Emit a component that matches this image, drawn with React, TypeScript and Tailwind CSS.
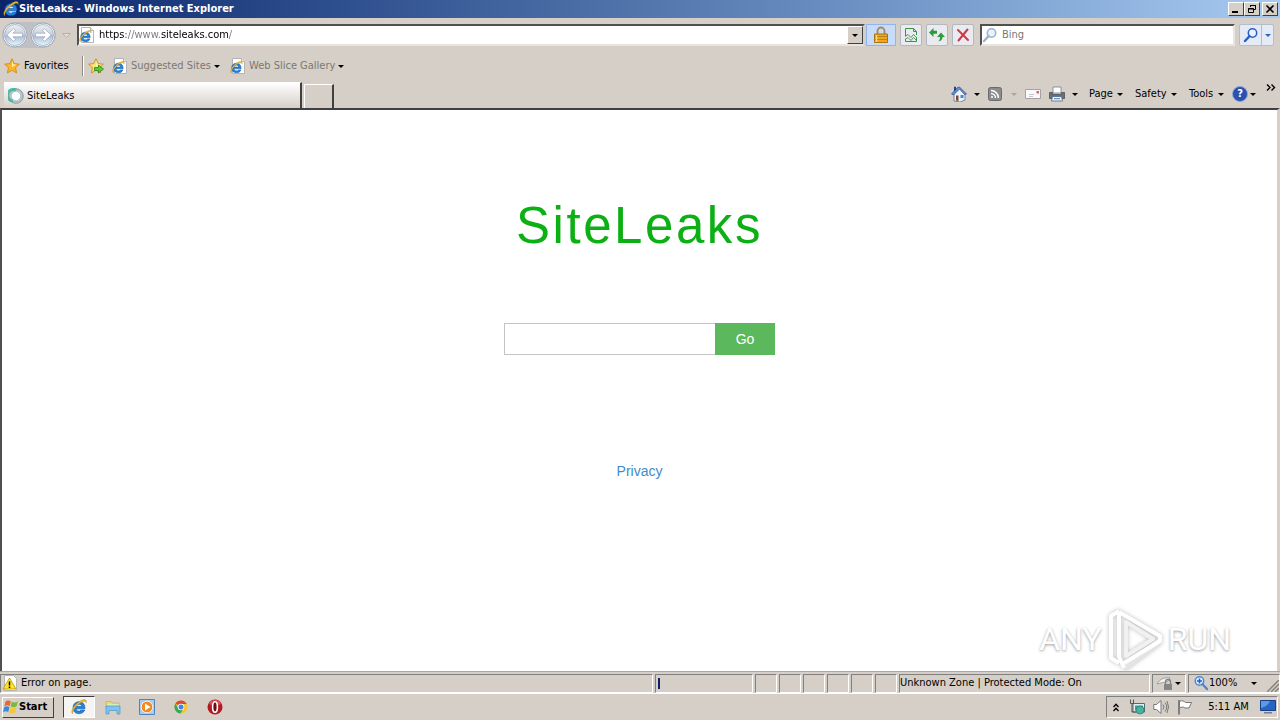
import { type ReactNode } from 'react'

const raised = 'border border-t-white border-l-white border-r-[#404040] border-b-[#404040] bg-[#d5cfc7]'
const sunken = 'border border-t-[#808080] border-l-[#808080] border-r-white border-b-white'

function Caret({ className = 'text-black' }: { className?: string }) {
  return (
    <svg viewBox="0 0 6 3" className={`h-[3px] w-[6px] shrink-0 ${className}`} fill="currentColor" aria-hidden="true">
      <path d="M0 0h6L3 3z" />
    </svg>
  )
}

function IeGlyph() {
  return (
    <>
      <path d="M14 9.800H5.200c.1 1.700 1.200 2.500 2.900 2.500 1.200 0 2-.4 2.500-1.200h3.100c-.8 2.300-2.800 3.600-5.700 3.600-3.700 0-6-2.300-6-5.900 0-3.700 2.400-6.100 6.100-6.100 3.800 0 6 2.600 5.900 7.100zM5.300 7.500h5.400C10.600 6 9.600 5.200 8 5.200S5.500 6 5.300 7.500z" fill="#2384dc" stroke="#0c4796" strokeWidth=".5" />
      <path d="M1.600 14.800C-1 12.400 3 6 8.500 2.400 12.500-.2 16.300-.3 15 3.800c.1-2.200-2.400-1.900-5.700.1C4.800 6.600 1.200 12 1.600 14.800z" fill="#f6bd2c" stroke="#a97c1c" strokeWidth=".4" />
    </>
  )
}

function IeIcon({ className = 'size-4' }: { className?: string }) {
  return (
    <svg viewBox="0 0 16 16" className={`shrink-0 ${className}`} aria-hidden="true">
      <circle cx="8" cy="8.500" r="5.500" fill="#cdeafd" />
      <IeGlyph />
    </svg>
  )
}

function PageIcon() {
  return (
    <svg viewBox="0 0 16 16" className="size-4 shrink-0" aria-hidden="true">
      <path d="M2.500.5h9l3 3v12h-12z" fill="#fff" stroke="#b4b4b4" />
      <path d="M11.500.5v3h3" fill="#eee" stroke="#b4b4b4" />
      <g transform="translate(0 3) scale(.8)">
        <IeGlyph />
      </g>
    </svg>
  )
}

function StarIcon({ add = false }: { add?: boolean }) {
  return (
    <svg viewBox="0 0 16 16" className="size-4 shrink-0" aria-hidden="true">
      <path d="M8 .8l2.200 4.800 5.200.6-3.900 3.500 1.100 5.200L8 12.300l-4.600 2.600 1.100-5.200L.6 6.200l5.200-.6z" fill={add ? '#fbe279' : '#fbb62d'} stroke="#d18a1b" strokeWidth=".9" />
      <path d="M8 3l1.300 3.300 3 .4L8 9z" fill="#fff0a8" />
      {add && <path d="M6.500 9.500h4V7l5 4-5 4v-2.500h-4z" fill="#5cc83e" stroke="#28861b" strokeWidth=".8" />}
    </svg>
  )
}

function NavButton({ label, back = false }: { label: string; back?: boolean }) {
  return (
    <button type="button" aria-label={label} className="size-[26px] shrink-0">
      <svg viewBox="0 0 26 26" className="size-full">
        <defs>
          <linearGradient id={back ? 'orb-back' : 'orb-next'} x1="0" y1="0" x2="0" y2="1">
            <stop offset="0" stopColor="#eceff4" />
            <stop offset=".48" stopColor="#c9d1de" />
            <stop offset=".5" stopColor="#a9b8d0" />
            <stop offset="1" stopColor="#e2f8ff" />
          </linearGradient>
        </defs>
        <circle cx="13" cy="13" r="12" fill="#fff" stroke="#a3a8b2" />
        <circle cx="13" cy="13" r="10.500" fill={back ? 'url(#orb-back)' : 'url(#orb-next)'} stroke="#8fa3bd" strokeWidth=".7" />
        <path
          d="M4.800 13l6.700-6.300 2 2-2.600 2.500h9.600v3.600h-9.600l2.600 2.500-2 2z"
          transform={back ? undefined : 'translate(26 0) scale(-1 1)'}
          fill="#fff"
          stroke="#8e9bb2"
          strokeWidth=".6"
        />
      </svg>
    </button>
  )
}

function Magnifier({ color, flip = false }: { color: string; flip?: boolean }) {
  return (
    <svg viewBox="0 0 16 16" className="size-4 shrink-0" aria-hidden="true">
      <g transform={flip ? 'translate(16 0) scale(-1 1)' : undefined} fill="none" stroke={color}>
        <circle cx="9.500" cy="6" r="4.200" fill="#e8f3fd" strokeWidth="1.500" />
        <path d="M6.400 9.200L2 14" strokeWidth="2.400" strokeLinecap="round" />
        {flip && <path d="M9.500 3.500v5M7 6h5" stroke="#1c5fd0" strokeWidth="1.600" />}
      </g>
    </svg>
  )
}

function ToolButton({ label, children }: { label: string; children: ReactNode }) {
  return (
    <button type="button" aria-label={label} className="flex h-[22px] w-[22px] shrink-0 items-center justify-center rounded-xs border border-[#b2b7c0] bg-[#e9ebf0]">
      {children}
    </button>
  )
}

function TitleBar() {
  return (
    <header className="flex h-[18px] items-center bg-linear-to-r from-[#0a246a] to-[#a6caf0] pr-[2px] pl-[3px] text-white">
      <IeIcon />
      <h1 className="flex-1 font-bold">SiteLeaks - Windows Internet Explorer</h1>
      <button type="button" aria-label="Minimize" className={`flex h-[14px] w-4 items-end p-[2px] ${raised}`}>
        <span className="ml-px h-[2px] w-[6px] bg-black" />
      </button>
      <button type="button" aria-label="Restore" className={`mr-[2px] flex h-[14px] w-4 items-center justify-center ${raised}`}>
        <svg viewBox="0 0 10 10" className="size-[10px]" fill="none" stroke="#000">
          <path d="M3.500 3V1.500h5v4H7M3 1.500h6M1.500 4.500h5v4h-5zM1 5h6" />
        </svg>
      </button>
      <button type="button" aria-label="Close" className={`flex h-[14px] w-4 items-center justify-center ${raised}`}>
        <svg viewBox="0 0 10 10" className="size-[10px]" fill="none" stroke="#000" strokeWidth="1.600">
          <path d="M1.500 1.500l7 7M8.500 1.500l-7 7" />
        </svg>
      </button>
    </header>
  )
}

function AddressRow() {
  return (
    <div className="flex h-[34px] items-center pr-[6px] pl-[2px]">
      <div className="flex gap-[2px] rounded-full bg-[#bfc0c6]">
        <NavButton label="Back" back />
        <NavButton label="Forward" />
      </div>
      <button type="button" aria-label="Recent pages" className="flex w-[21px] justify-center">
        <svg viewBox="0 0 9 5" className="h-[5px] w-[9px]">
          <path d="M.8.5h7.400L4.500 4.400z" fill="#e6e2dc" stroke="#a9a5a0" strokeWidth=".8" />
        </svg>
      </button>
      <div className="flex h-[22px] flex-1 items-center border-2 border-t-[#505050] border-r-[#d5cfc7] border-b-[#e8e4de] border-l-[#505050] bg-white">
        <PageIcon />
        <input
          type="text"
          aria-label="Address"
          defaultValue="https://www.siteleaks.com/"
          className="ml-1 h-4 min-w-0 flex-1 bg-[linear-gradient(to_right,#000_27px,#777_27px,#777_62px,#000_62px,#000_129px,#777_129px)] bg-clip-text text-transparent outline-none"
        />
        <button type="button" aria-label="Show addresses" className={`flex h-[18px] w-4 items-center justify-center ${raised}`}>
          <Caret />
        </button>
      </div>
      <button type="button" aria-label="Security report" className="ml-px flex h-[22px] w-[30px] items-center justify-center border border-[#8fb4f0] bg-[#c8dbfb]">
        <svg viewBox="0 0 16 18" className="h-[18px] w-4">
          <path d="M4.500 8V5a3.500 3.500 0 017 0v3" fill="none" stroke="#a48a55" strokeWidth="1.800" />
          <path d="M1.500 8h13v8.500h-13z" fill="#eda91f" stroke="#a87310" />
          <path d="M2 10.500h12M2 13.500h12" stroke="#c17f0b" />
          <path d="M3.500 9v7" stroke="#ffd978" strokeWidth="1.500" />
        </svg>
      </button>
      <div className="ml-1 flex gap-1">
        <ToolButton label="Compatibility view">
          <svg viewBox="0 0 16 16" className="size-4 shrink-0" fill="none" stroke="#389442">
            <path d="M2.500 9V1.500h8l3 3V8M2.500 12v2.500h11V11M10.500 1.500v3h3" />
            <path d="M2 9.500l3-2 3 3 2.500-3L14 11M2 12.500l3-2 3 3 2.500-3L14 14" strokeWidth=".9" />
          </svg>
        </ToolButton>
        <ToolButton label="Refresh">
          <svg viewBox="0 0 16 16" className="size-4 shrink-0" fill="#2f9a3c">
            <path d="M0 5.500L4.500 1v2.700h3.500v3H4.500V10z" />
            <path d="M12 5.500l4 4.500h-2.400c-.2 2.700-1.700 4.300-4.600 4.500 1.500-1 2-2.400 2-4.500H8z" />
          </svg>
        </ToolButton>
        <ToolButton label="Stop">
          <svg viewBox="0 0 16 16" className="size-4 shrink-0" fill="none" stroke="#cf3a42" strokeWidth="2" strokeLinecap="round">
            <path d="M3 3l10 10M12.500 2.500L3.500 13.500" />
          </svg>
        </ToolButton>
      </div>
      <div className="ml-[6px] flex h-[22px] w-[255px] items-center border-2 border-t-[#505050] border-r-[#e8e4de] border-b-[#e8e4de] border-l-[#505050] bg-white">
        <Magnifier color="#9db1c8" />
        <input type="search" aria-label="Search" placeholder="Bing" className="ml-1 h-4 min-w-0 flex-1 outline-none placeholder:text-[#777]" />
      </div>
      <div className="ml-1 flex h-[22px] rounded-xs border border-[#b2bdd0] bg-[#e4ebf6]">
        <button type="button" aria-label="Go" className="flex w-[21px] items-center justify-center">
          <Magnifier color="#2a5dc4" />
        </button>
        <button type="button" aria-label="Search options" className="flex w-3 items-center justify-center border-l border-[#b2bdd0]">
          <Caret className="text-[#2d66ad]" />
        </button>
      </div>
    </div>
  )
}

function FavoritesRow() {
  return (
    <div className="flex h-7 items-center pl-1 whitespace-nowrap">
      <button type="button" className="flex w-[78px] items-center gap-1">
        <StarIcon />
        Favorites
      </button>
      <span className="h-5 w-[2px] border-r border-l border-r-white border-l-[#8e8a85]" />
      <button type="button" aria-label="Add to Favorites Bar" className="ml-1 flex">
        <StarIcon add />
      </button>
      <button type="button" className="ml-2 flex w-[108px] items-center gap-[3px] text-[#7b7873]">
        <PageIcon />
        <span className="flex-1 text-left">Suggested Sites</span>
        <Caret />
      </button>
      <button type="button" className="ml-[10px] flex w-[113px] items-center gap-[3px] text-[#7b7873]">
        <PageIcon />
        <span className="flex-1 text-left">Web Slice Gallery</span>
        <Caret />
      </button>
    </div>
  )
}

function Menu({ label, width }: { label: string; width: string }) {
  return (
    <button type="button" className={`flex items-center justify-between ${width}`}>
      {label}
      <Caret />
    </button>
  )
}

function TabRow() {
  return (
    <div className="flex h-7 pl-1">
      <nav aria-label="Tabs" className="flex flex-1 items-end gap-[2px]">
        <a href="#page" className="flex h-[26px] w-[298px] items-center gap-[3px] border-t border-r-2 border-t-white border-r-[#404040] bg-linear-to-b from-white to-[#d5cfc7] pl-1">
          <svg viewBox="0 0 16 16" className="size-4 shrink-0" fill="none" strokeWidth="3">
            <circle cx="8" cy="8" r="5.800" fill="#fff" stroke="#b4c6ca" />
            <path d="M8 2.200A5.800 5.800 0 105 13" stroke="#4fc3a7" />
            <circle cx="8" cy="8" r="7.300" stroke="#6d8a90" strokeWidth=".7" />
          </svg>
          SiteLeaks
        </a>
        <button type="button" aria-label="New Tab" className="h-6 w-[30px] border-t border-r-2 border-l border-t-white border-r-[#404040] border-l-white" />
      </nav>
      <div className="flex items-center pr-1">
        <button type="button" aria-label="Home" className="flex w-[29px] items-center justify-between">
          <svg viewBox="0 0 16 16" className="size-4">
            <path d="M3 7v8l6 1 5-2V8L8 2z" fill="#e9f2fd" stroke="#54709e" strokeWidth=".8" />
            <path d="M.5 8L6.500 1.500l2-.5L15.500 8l-2 .5-5-5.500-6 6z" fill="#6a8fd0" stroke="#284a8c" strokeWidth=".7" />
            <path d="M3 .8h2v3l-2 2z" fill="#24408a" />
            <path d="M5 9.500h2.500V15L5 14.500z" fill="#7a4a2a" />
            <path d="M9.500 9h3v3h-3z" fill="#3f8bd0" />
          </svg>
          <Caret />
        </button>
        <button type="button" aria-label="Feeds" className="ml-2 flex w-[29px] items-center justify-between">
          <svg viewBox="0 0 14 14" className="size-[14px]" fill="none" stroke="#fff" strokeWidth="1.500">
            <rect x=".5" y=".5" width="13" height="13" rx="2" fill="#8c8c8c" stroke="#6b6b6b" strokeWidth="1" />
            <path d="M3 6.500a4.500 4.500 0 014.500 4.500M3 3.500A7.500 7.500 0 0110.500 11" />
            <circle cx="4" cy="10" r="1" fill="#fff" stroke="none" />
          </svg>
          <Caret className="text-[#a9a5a0]" />
        </button>
        <button type="button" aria-label="Read mail" className="ml-2">
          <svg viewBox="0 0 16 10" className="h-[10px] w-4">
            <path d="M.5.5h15v9H.500z" fill="#fbfafa" stroke="#a7a2a0" />
            <path d="M11.500 2h2.500v2.500h-2.500z" fill="#d9626e" />
            <path d="M4 5.500h5M4 7.500h4" stroke="#c8c4c8" />
          </svg>
        </button>
        <button type="button" aria-label="Print" className="ml-2 flex w-[29px] items-center justify-between">
          <svg viewBox="0 0 16 16" className="size-4">
            <path d="M4 1h8v6H4z" fill="#fff" stroke="#747c88" strokeWidth=".8" />
            <path d="M.5 6.500h3v2h9v-2h3v6H.500z" fill="#686f79" stroke="#4b525b" strokeWidth=".8" />
            <path d="M3.500 10.500h9l1 4.500H2.500z" fill="#eaf1fa" stroke="#5c6a80" strokeWidth=".8" />
            <path d="M5 12.700h6" stroke="#3f8ad8" />
          </svg>
          <Caret />
        </button>
        <div className="ml-[11px] flex gap-3">
          <Menu label="Page" width="w-[34px]" />
          <Menu label="Safety" width="w-[42px]" />
          <Menu label="Tools" width="w-[35px]" />
        </div>
        <button type="button" aria-label="Help" className="ml-2 flex w-6 items-center justify-between">
          <span className="flex size-4 items-center justify-center rounded-full border border-[#8ba4d8] bg-[#2b51b0] font-bold text-white">?</span>
          <Caret />
        </button>
        <button type="button" aria-label="More commands" className="ml-[10px] self-start pt-1">
          <svg viewBox="0 0 10 7" className="block h-[7px] w-[10px]" fill="none" stroke="#000" strokeWidth="1.400">
            <path d="M1 .5l3 3-3 3M5.500.5l3 3-3 3" />
          </svg>
        </button>
      </div>
    </div>
  )
}

function Watermark() {
  return (
    <div className="absolute right-[46px] bottom-0 flex items-center gap-1 font-[Roboto,sans-serif] text-[32px] leading-10 text-white [text-shadow:0_1px_3px_#999]">
      <span>ANY</span>
      <svg viewBox="0 0 58 64" className="h-16 w-[58px] drop-shadow-[0_0_2px_#bbb]" fill="none" strokeWidth="4" strokeLinejoin="round" aria-hidden="true">
        <path d="M13 4L5 9v42l8 5" stroke="#fff" />
        <path d="M18 61l36-27" stroke="#e4e4e4" strokeWidth="6" />
        <path d="M13 5v45l5 11M13 5l41 24v5L18 56" stroke="#fff" />
        <path d="M20 15l27 17-27 17z" stroke="#f1f1f1" />
      </svg>
      <span>RUN</span>
    </div>
  )
}

function Page() {
  return (
    <main id="page" className="relative flex flex-1 flex-col items-center border-t-2 border-r-3 border-l-2 border-t-[#404040] border-r-[#d5cfc7] border-l-[#505050] bg-white pt-[84px] font-['Liberation_Sans',Arial,sans-serif] text-sm">
      <h2 className="text-[51px] leading-16 tracking-wider text-[#0cb014]">SiteLeaks</h2>
      <form className="mt-[65px] flex h-8">
        <input type="text" aria-label="Search SiteLeaks" className="w-[211px] border border-r-0 border-[#c4c4c4] px-2 outline-none" />
        <button type="button" className="w-[60px] bg-[#5cb85c] text-white">
          Go
        </button>
      </form>
      <a href="#privacy" className="mt-[106px] text-[#428bca]">
        Privacy
      </a>
      <Watermark />
    </main>
  )
}

function StatusBar() {
  return (
    <footer className="flex h-[23px] items-center gap-[2px] border-t border-b border-t-[#aaa6a0] border-b-white pt-px">
      <div className={`flex h-[19px] flex-1 items-center gap-[3px] pl-px ${sunken}`}>
        <svg viewBox="0 0 16 16" className="size-4 shrink-0" aria-hidden="true">
          <path d="M2.500.5h9l3 3v12h-12z" fill="#fff" stroke="#b5b5b5" />
          <path d="M7.500 3L14 14H1z" fill="#ffe327" stroke="#b39400" strokeWidth=".8" />
          <path d="M7.500 6.500v4M7.500 11.500V13" stroke="#000" strokeWidth="1.500" />
        </svg>
        Error on page.
      </div>
      <div className={`h-[19px] w-[98px] py-[3px] pl-[2px] ${sunken}`}>
        <div className="h-full w-[2px] bg-[#0a246a]" />
      </div>
      {[0, 1, 2, 3, 4, 5].map((i) => (
        <div key={i} className={`h-[19px] w-[22px] ${sunken}`} />
      ))}
      <div className={`flex h-[19px] w-[251px] items-center ${sunken}`}>Unknown Zone | Protected Mode: On</div>
      <button type="button" aria-label="InPrivate settings" className={`flex h-[19px] w-[34px] items-center justify-between px-1 ${sunken}`}>
        <svg viewBox="0 0 16 16" className="size-4" fill="none">
          <path d="M0 9c3-5 7-7 13-6-1 2-2 3-3 4-3 0-6 1-10 2z" fill="#f1f1f1" stroke="#8c8c8c" strokeWidth=".8" />
          <path d="M8.500 9V7a2.500 2.500 0 015 0v2" stroke="#808080" strokeWidth="1.300" />
          <path d="M7 9h8v6H7z" fill="#858585" />
        </svg>
        <Caret />
      </button>
      <div className={`flex h-[19px] w-[92px] items-center pl-1 ${sunken}`}>
        <button type="button" className="flex w-[64px] items-center">
          <Magnifier color="#4b87d6" flip />
          <span className="flex-1 text-left">100%</span>
          <Caret />
        </button>
        <svg viewBox="0 0 12 12" className="ml-auto size-3 self-end" stroke="#85817b" strokeWidth="1.500" aria-hidden="true">
          <path d="M0 12L12 0M4 12l8-8M8 12l4-4" />
        </svg>
      </div>
    </footer>
  )
}

function TaskBar() {
  return (
    <div className="flex h-[26px] items-center px-[2px]">
      <button type="button" className={`flex h-[21px] w-[52px] items-center font-bold ${raised}`}>
        <svg viewBox="0 0 16 16" className="size-4 shrink-0" aria-hidden="true">
          <path d="M2.500 2.500C4.500 1 6 1.300 7.800 2.300L6.700 7.200C5 6.200 3.500 6 1.500 7.200z" fill="#ec6531" />
          <path d="M8.700 2.800c2 1 3.700 1 6.100-.5L13.600 7.200c-2 1.200-3.800 1.300-5.900.4z" fill="#79b93e" />
          <path d="M1.200 8.200C3 7 4.800 7.200 6.400 8.200L5.200 13C3.500 12 2 12 0 13.200z" fill="#3989d6" />
          <path d="M7.400 8.700c2 1 3.800.9 6-.4L12.200 13c-2.200 1.400-4 1.500-6 .5z" fill="#f8c72c" />
        </svg>
        Start
      </button>
      <nav aria-label="Taskbar" className="ml-[9px] flex flex-1 items-center">
        <button type="button" aria-label="Internet Explorer" className="mr-[10px] flex h-[22px] w-8 items-center justify-center border border-t-[#404040] border-r-white border-b-white border-l-[#404040] bg-[#f6f4f1]">
          <IeIcon />
        </button>
        <div className="flex gap-[18px]">
          <button type="button" aria-label="Windows Explorer">
            <svg viewBox="0 0 16 16" className="block size-4">
              <path d="M1 2.500h5l1 1.500h7v5H1z" fill="#f1d777" stroke="#cba94a" strokeWidth=".7" />
              <path d="M2.500 5h11v3h-11z" fill="#d6efb5" />
              <path d="M1 7h14v8h-3v-3.500H4V15H1z" fill="#7fc4ec" stroke="#4e96c6" strokeWidth=".7" />
            </svg>
          </button>
          <button type="button" aria-label="Media Player">
            <svg viewBox="0 0 16 16" className="block size-4">
              <path d="M.5.5h15v15H.500z" fill="#a9cdee" stroke="#4f83bd" />
              <circle cx="8" cy="8" r="5.800" fill="#f38a1d" stroke="#fff" strokeWidth=".8" />
              <path d="M6 4.500L11.500 8 6 11.500z" fill="#fff" />
            </svg>
          </button>
          <button type="button" aria-label="Chrome">
            <svg viewBox="0 0 16 16" className="block size-4">
              <circle cx="8" cy="8" r="6.500" fill="#f4c82c" />
              <path d="M8 8L2.400 4.600A6.500 6.500 0 0113.700 4.900H8z" fill="#dd4738" />
              <path d="M2.400 4.600A6.500 6.500 0 007.500 14.500l3-5L8 8l-3 1z" fill="#3aa757" />
              <circle cx="8" cy="8" r="3.300" fill="#fff" />
              <circle cx="8" cy="8" r="2.500" fill="#3f82e8" />
            </svg>
          </button>
          <button type="button" aria-label="Opera">
            <svg viewBox="0 0 16 16" className="block size-4">
              <circle cx="8" cy="8" r="7.500" fill="#b3191f" />
              <path d="M2 5a6.500 6.500 0 0112 0c-4 2-8 2-12 0z" fill="#d8545a" />
              <ellipse cx="8" cy="8" rx="2.400" ry="5.200" fill="#6b0d12" stroke="#fff" strokeWidth="1.600" />
            </svg>
          </button>
        </div>
      </nav>
      <div className={`flex h-[22px] w-[172px] items-center pr-px pl-[6px] ${sunken}`}>
        <button type="button" aria-label="Show hidden icons">
          <svg viewBox="0 0 6 9" className="block h-[9px] w-[6px]" fill="none" stroke="#000" strokeWidth="1.300">
            <path d="M.5 4L3 1.200 5.500 4M.5 8L3 5.200 5.500 8" />
          </svg>
        </button>
        <svg viewBox="0 0 16 16" className="ml-[10px] size-4" aria-hidden="true">
          <path d="M4 4.500h11.500v8.500H4z" fill="#dff1ef" stroke="#576a70" />
          <path d="M6 6.500h8v5H6z" fill="#3f9db0" />
          <circle cx="11" cy="11" r="4" fill="#48b49d" stroke="#217c70" strokeWidth=".7" />
          <path d="M1.500.5v4h3v-4M3 4.500V13h4" fill="none" stroke="#555" />
        </svg>
        <svg viewBox="0 0 16 16" className="ml-2 size-4" fill="none" stroke="#777" aria-hidden="true">
          <path d="M.8 5.500h2.700L8 1.500v13l-4.500-4H.800z" fill="#fff" />
          <path d="M10 5.500q2 2.500 0 5M12 3.500q3.500 4.500 0 9M14 2q3 6 0 12" />
        </svg>
        <svg viewBox="0 0 16 16" className="ml-2 size-4" aria-hidden="true">
          <path d="M2 1v14.500" stroke="#666" strokeWidth="1.500" />
          <path d="M2.500 2.500C5 1 7 2 8.500 3.500h6L12 9H8C6 7.500 4.500 8 2.500 9z" fill="#fff" stroke="#777" />
        </svg>
        <time className="flex-1 pl-1 text-center">5:11 AM</time>
        <button type="button" aria-label="Show desktop">
          <svg viewBox="0 0 16 14" className="block h-[14px] w-4">
            <path d="M.5.500h15v10H.500z" fill="#2566c4" stroke="#1b3f86" />
            <path d="M1 1h9C8 5 5 7 1 8z" fill="#5d9ae6" />
            <path d="M4 12h8v1.500H4z" fill="#727d90" />
          </svg>
        </button>
      </div>
    </div>
  )
}

export default function App() {
  return (
    <div className="flex min-h-screen flex-col bg-[#d5cfc7] font-['DejaVu_Sans_Condensed','DejaVu_Sans',sans-serif] text-[11px] leading-4 text-black">
      <TitleBar />
      <AddressRow />
      <FavoritesRow />
      <TabRow />
      <Page />
      <StatusBar />
      <TaskBar />
    </div>
  )
}
